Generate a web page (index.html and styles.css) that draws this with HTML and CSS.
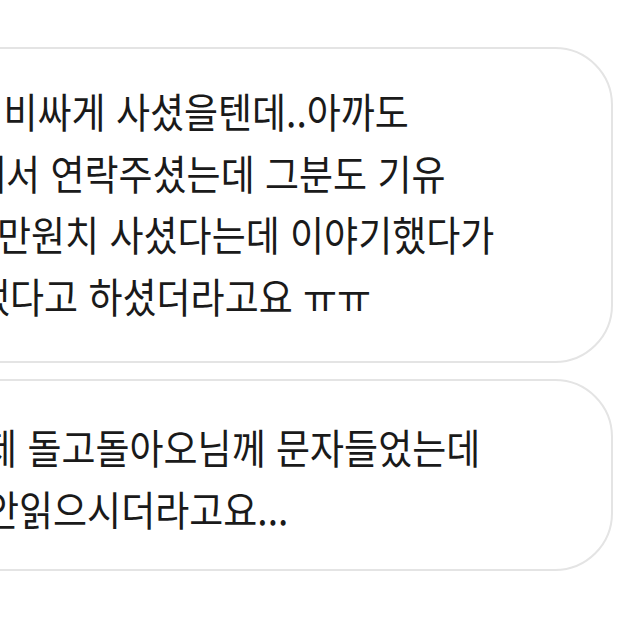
FILE: index.html
```html
<!DOCTYPE html>
<html lang="ko">
<head>
<meta charset="utf-8">
<title>채팅</title>
<link rel="stylesheet" href="styles.css">
</head>
<body>
<div class="chat">
  <div class="bubble bubble-long">
    <p class="line l1">꽤 비싸게 사셨을텐데..아까도</p>
    <p class="line l2">에서 연락주셨는데 그분도 기유</p>
    <p class="line l3">몇만원치 사셨다는데 이야기했다가</p>
    <p class="line l4">했다고 하셨더라고요 ㅠㅠ</p>
  </div>
  <div class="bubble bubble-short">
    <p class="line l5">제 돌고돌아오님께 문자들었는데</p>
    <p class="line l6">안읽으시더라고요...</p>
  </div>
</div>
</body>
</html>
```
FILE: styles.css
```css
html, body {
  margin: 0;
  padding: 0;
  background: #ffffff;
  overflow: hidden;
}

body {
  width: 621px;
  height: 621px;
  font-family: "Noto Sans CJK KR", "Noto Sans", sans-serif;
  color: #1a1a1a;
}

.chat {
  display: flex;
  flex-direction: column;
  gap: 16px;
  margin-left: -82px;
  padding: 47px 8px 0 0;
}

.bubble {
  background: #ffffff;
  border: 2px solid #e4e4e4;
  border-radius: 58px;
  padding-left: 40px;
}

.bubble-long {
  padding-top: 31px;
  padding-bottom: 35px;
}

.bubble-short {
  padding-top: 35px;
  padding-bottom: 30px;
}

.line {
  margin: 0;
  font-size: 37px;
  line-height: 61.5px;
  white-space: nowrap;
  transform: scaleY(1.1);
}

.l1 { text-indent: -1px; }
.l2 { text-indent: 12px; }
.l3 { text-indent: 3px; }
.l4 { text-indent: 16px; }
.l5 { text-indent: 23px; }
.l6 { text-indent: 25px; }
```
